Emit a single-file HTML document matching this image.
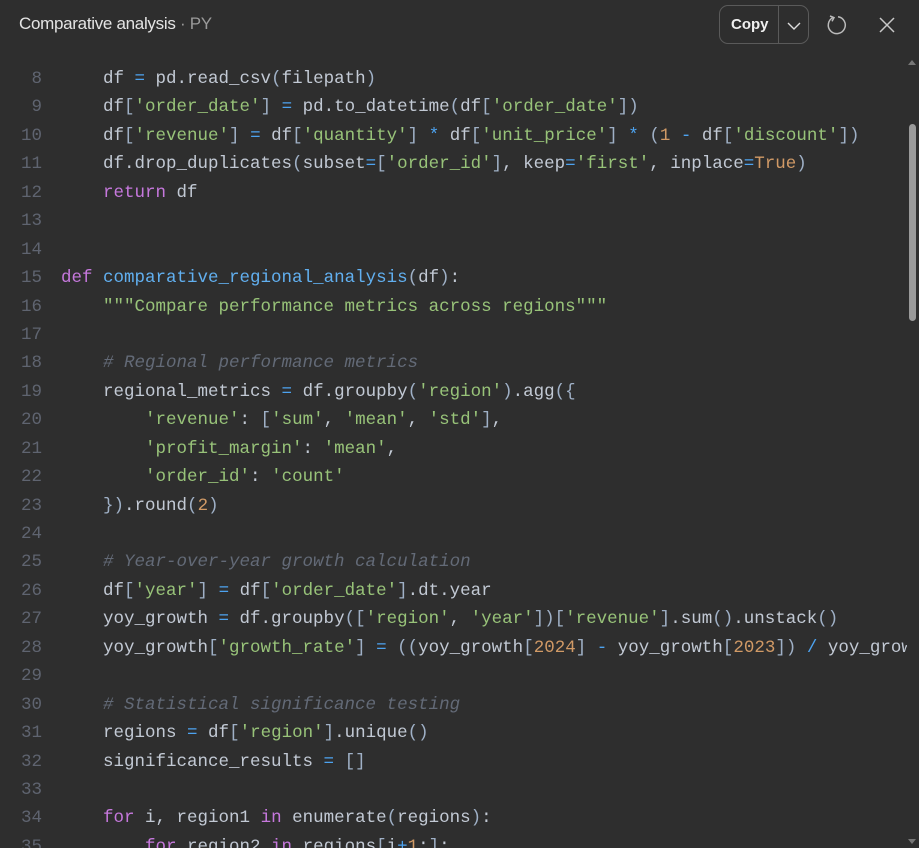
<!DOCTYPE html>
<html><head><meta charset="utf-8"><style>
html,body{margin:0;padding:0;background:#2e2e2e;width:919px;height:848px;overflow:hidden}
.hdr{position:absolute;left:0;top:0;width:919px;height:50px}
.title{position:absolute;left:19px;top:14px;font:17px "Liberation Sans",sans-serif;color:#e4e4e4;letter-spacing:-0.3px}
.title span{color:#9a9a9a}
.copy{position:absolute;left:719px;top:5px;width:90px;height:39px;border:1px solid #5a5a5a;border-radius:9px;box-sizing:border-box}
.copy .t{position:absolute;left:11px;top:10px;font:bold 15px "Liberation Sans",sans-serif;color:#f0f0f0}
.copy .d{position:absolute;left:58px;top:0;width:1px;height:37px;background:#5a5a5a}
.code{position:absolute;left:0;top:50px;width:907px;height:798px;overflow:hidden}
.ln{position:absolute;left:0;width:42px;text-align:right;color:#5f6470}
.l{position:absolute;left:61px;white-space:pre;color:#c2c9d4}
.row{font:17.5px "Liberation Mono",monospace;line-height:28.44px}
.k{color:#c678dd}.f{color:#61afef}.s{color:#98c379}.n{color:#d19a66}.o{color:#4da3f0}.c{color:#636a77;font-style:italic}.b{color:#9fb0c6}
.sb{position:absolute;left:909px;top:124px;width:7px;height:197px;border-radius:4px;background:#9a9a9a}
</style></head><body>
<div class="hdr">
<div class="title">Comparative analysis <span>· PY</span></div>
<div class="copy"><div class="t">Copy</div><div class="d"></div>
<svg style="position:absolute;left:66px;top:14px" width="16" height="12" viewBox="0 0 16 12"><path d="M2 3 L8 9 L14 3" fill="none" stroke="#ddd" stroke-width="1.4"/></svg></div>
<svg style="position:absolute;left:826px;top:14px" width="22" height="22" viewBox="0 0 22 22"><path d="M7 3.5 A8.5 8.5 0 1 0 12 2.7" fill="none" stroke="#bbb" stroke-width="1.5"/><path d="M4 2 L8 3.6 L6 7.3" fill="none" stroke="#bbb" stroke-width="1.5"/></svg>
<svg style="position:absolute;left:878px;top:16px" width="18" height="18" viewBox="0 0 18 18"><path d="M2 2 L16 16 M16 2 L2 16" stroke="#c8c8c8" stroke-width="1.5"/></svg>
</div>
<div class="code" id="c"></div>
<div class="sb"></div>
<svg style="position:absolute;left:907px;top:58px" width="10" height="8"><path d="M1 7 L5 2 L9 7Z" fill="#777"/></svg>
<svg style="position:absolute;left:907px;top:838px" width="10" height="8"><path d="M1 1 L5 6 L9 1Z" fill="#777"/></svg>
<script>
var L={
8:'    df <o>=</o> pd.read_csv<b>(</b>filepath<b>)</b>',
9:"    df<b>[</b><s>'order_date'</s><b>]</b> <o>=</o> pd.to_datetime<b>(</b>df<b>[</b><s>'order_date'</s><b>])</b>",
10:"    df<b>[</b><s>'revenue'</s><b>]</b> <o>=</o> df<b>[</b><s>'quantity'</s><b>]</b> <o>*</o> df<b>[</b><s>'unit_price'</s><b>]</b> <o>*</o> <b>(</b><n>1</n> <o>-</o> df<b>[</b><s>'discount'</s><b>])</b>",
11:"    df.drop_duplicates<b>(</b>subset<o>=</o><b>[</b><s>'order_id'</s><b>]</b>, keep<o>=</o><s>'first'</s>, inplace<o>=</o><n>True</n><b>)</b>",
12:'    <k>return</k> df',
13:'',14:'',
15:'<k>def</k> <f>comparative_regional_analysis</f><b>(</b>df<b>)</b>:',
16:'    <s>"""Compare performance metrics across regions"""</s>',
17:'',
18:'    <c># Regional performance metrics</c>',
19:"    regional_metrics <o>=</o> df.groupby<b>(</b><s>'region'</s><b>)</b>.agg<b>({</b>",
20:"        <s>'revenue'</s>: <b>[</b><s>'sum'</s>, <s>'mean'</s>, <s>'std'</s><b>]</b>,",
21:"        <s>'profit_margin'</s>: <s>'mean'</s>,",
22:"        <s>'order_id'</s>: <s>'count'</s>",
23:'    <b>})</b>.round<b>(</b><n>2</n><b>)</b>',
24:'',
25:'    <c># Year-over-year growth calculation</c>',
26:"    df<b>[</b><s>'year'</s><b>]</b> <o>=</o> df<b>[</b><s>'order_date'</s><b>]</b>.dt.year",
27:"    yoy_growth <o>=</o> df.groupby<b>([</b><s>'region'</s>, <s>'year'</s><b>])[</b><s>'revenue'</s><b>]</b>.sum<b>()</b>.unstack<b>()</b>",
28:"    yoy_growth<b>[</b><s>'growth_rate'</s><b>]</b> <o>=</o> <b>((</b>yoy_growth<b>[</b><n>2024</n><b>]</b> <o>-</o> yoy_growth<b>[</b><n>2023</n><b>])</b> <o>/</o> yoy_growth<b>[</b><n>2023</n><b>])</b>",
29:'',
30:'    <c># Statistical significance testing</c>',
31:"    regions <o>=</o> df<b>[</b><s>'region'</s><b>]</b>.unique<b>()</b>",
32:'    significance_results <o>=</o> <b>[]</b>',
33:'',
34:'    <k>for</k> i, region1 <k>in</k> enumerate<b>(</b>regions<b>)</b>:',
35:'        <k>for</k> region2 <k>in</k> regions<b>[</b>i<o>+</o><n>1</n>:<b>]</b>:'
};
var h='';
for(var n=8;n<=35;n++){var t=(65-50)+(n-8)*28.44;
var s=L[n].replace(/<(\w)>/g,'<span class="$1">').replace(/<\/\w>/g,'</span>');
h+='<div class="row ln" style="top:'+t+'px">'+n+'</div><div class="row l" style="top:'+t+'px">'+s+'</div>';}
document.getElementById('c').innerHTML=h;
</script>
</body></html>
